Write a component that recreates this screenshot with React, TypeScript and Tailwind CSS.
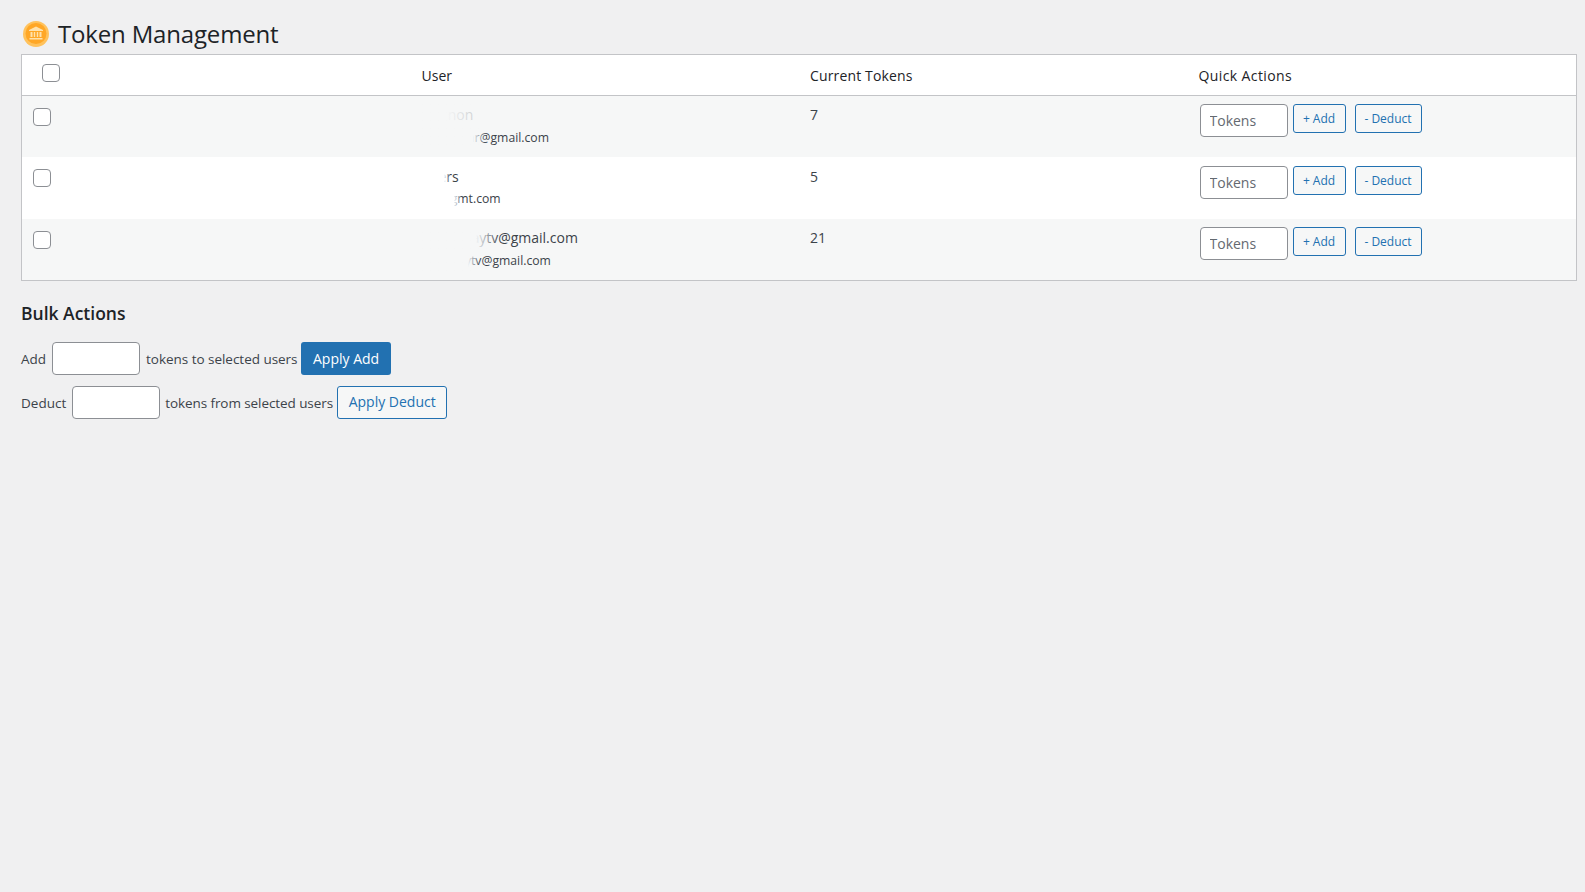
export default function App() {
  const rows = [
    { name: "Unknon", email: "unknownr@gmail.com", t: "7", pt: "pt-[8px]", bg: "bg-[#f6f7f7]", fade1: "from-[#f6f7f7] via-[#f6f7f7] to-[#f6f7f7cc] w-[calc(100%+2px)]", fade2: "from-[#f6f7f7] via-[#f6f7f7] via-80% to-transparent w-[66px]", h: "h-[61px]" },
    { name: "Users", email: "usr@gmt.com", t: "5", pt: "pt-[9px]", bg: "bg-white", fade1: "from-white via-white via-80% to-transparent w-[30px]", fade2: "from-white via-white via-80% to-transparent w-[42px]", h: "h-[62px]" },
    { name: "vortexdaytv@gmail.com", email: "vortexdytv@gmail.com", t: "21", pt: "pt-[8px]", bg: "bg-[#f6f7f7]", fade1: "from-[#f6f7f7] via-[#f6f7f7] via-70% to-[#f6f7f700] w-[80px]", fade2: "from-[#f6f7f7] via-[#f6f7f7] via-80% to-transparent w-[60px]", h: "h-[61px]" },
  ];
  const font = "font-['Open_Sans','Noto_Sans',sans-serif]";
  return (
    <div className={`min-h-screen bg-[#f0f0f1] pl-[21px] pr-[8px] text-[#3c434a] ${font}`}>
      <h1 className="flex h-[54px] items-end pb-[5px] text-[24px] leading-[30px] text-[#1d2327]">
        <svg width="26" height="26" viewBox="0 0 26 26" className="ml-[2px] mr-[9px] mb-[2px]">
          <circle cx="13" cy="13" r="13" fill="#ffc25c" />
          <circle cx="13" cy="12.5" r="10.5" fill="#ffa726" />
          <path d="M13 5.5 L20 9 V10 H6 V9 Z M7.5 11 H9.5 V16 H7.5 Z M10.8 11 H12.2 V16 H10.8 Z M13.8 11 H15.2 V16 H13.8 Z M16.5 11 H18.5 V16 H16.5 Z M6.5 17 H19.5 V18.5 H6.5 Z" fill="#ffe2ad" />
        </svg>
        <span className="tracking-[-0.17px]">Token Management</span>
      </h1>
      <div className="border border-[#c3c4c7] bg-white">
        <div className="grid h-[41px] grid-cols-4 border-b border-[#c3c4c7] text-[14px] text-[#1d2327]">
          <div className="pl-[20px] pt-[9px]">
            <input type="checkbox" className="block size-[18px] appearance-none rounded-[4px] border border-[#8c8f94] bg-white" />
          </div>
          <div className="pl-[11px] pt-[9px] leading-[24px]">User</div>
          <div className="pl-[11px] pt-[9px] leading-[24px] tracking-[0.15px]">Current Tokens</div>
          <div className="pl-[11px] pt-[9px] leading-[24px] tracking-[0.4px]">Quick Actions</div>
        </div>
        {rows.map((r) => (
          <div key={r.t} className={`grid grid-cols-4 text-[14px] ${r.bg} ${r.h}`}>
            <div className="pl-[11px] pt-[12px]">
              <input type="checkbox" className="block size-[18px] appearance-none rounded-[4px] border border-[#8c8f94] bg-white" />
            </div>
            <div className={`pl-[11px] ${r.pt}`}>
              <div className="relative w-fit leading-[22px]">
                {r.name}
                <div className={`absolute inset-y-0 left-[-2px] bg-gradient-to-r ${r.fade1}`} />
              </div>
              <div className={`relative w-fit text-[12.2px] leading-[22px] ${r.t === "5" ? "" : "top-[1px]"}`}>
                {r.email}
                <div className={`absolute inset-y-0 left-[-2px] bg-gradient-to-r ${r.fade2}`} />
              </div>
            </div>
            <div className={`pl-[11px] ${r.pt} leading-[22px]`}>{r.t}</div>
            <div className={`flex items-start pl-[12px] ${r.pt}`}>
              <input placeholder="Tokens" className="h-[33px] w-[88px] rounded-[4px] border border-[#8c8f94] bg-white px-[9px] text-[14px] placeholder:text-[#646970]" />
              <button className="ml-[5px] h-[29px] w-[53px] rounded-[3px] border border-[#2271b1] bg-[#f6f7f7] text-[12px] text-[#2271b1]">+ Add</button>
              <button className="ml-[9px] h-[29px] w-[67px] rounded-[3px] border border-[#2271b1] bg-[#f6f7f7] text-[12px] text-[#2271b1]">- Deduct</button>
            </div>
          </div>
        ))}
      </div>
      <h3 className="mt-[20px] text-[17.5px] font-semibold leading-[24px] text-[#1d2327]">Bulk Actions</h3>
      <div className="mt-[17px] flex h-[33px] items-center text-[13.5px]">
        <span className="pt-[2px]">Add</span>
        <input className="ml-[6px] h-[33px] w-[88px] rounded-[4px] border border-[#8c8f94] bg-white" />
        <span className="ml-[6px] w-[155px] whitespace-nowrap pt-[2px] tracking-[-0.03px]">tokens to selected users</span>
        <button className="h-[33px] w-[90px] rounded-[3px] bg-[#2271b1] text-[14px] text-white">Apply Add</button>
      </div>
      <div className="mt-[11px] flex h-[33px] items-center text-[13.5px]">
        <span className="pt-[2px]">Deduct</span>
        <input className="ml-[6px] h-[33px] w-[88px] rounded-[4px] border border-[#8c8f94] bg-white" />
        <span className="ml-[5px] w-[172px] whitespace-nowrap pt-[2px] tracking-[-0.08px]">tokens from selected users</span>
        <button className="h-[33px] w-[110px] rounded-[3px] border border-[#2271b1] bg-[#f6f7f7] pb-[2px] text-[14px] text-[#2271b1]">Apply Deduct</button>
      </div>
    </div>
  );
}
